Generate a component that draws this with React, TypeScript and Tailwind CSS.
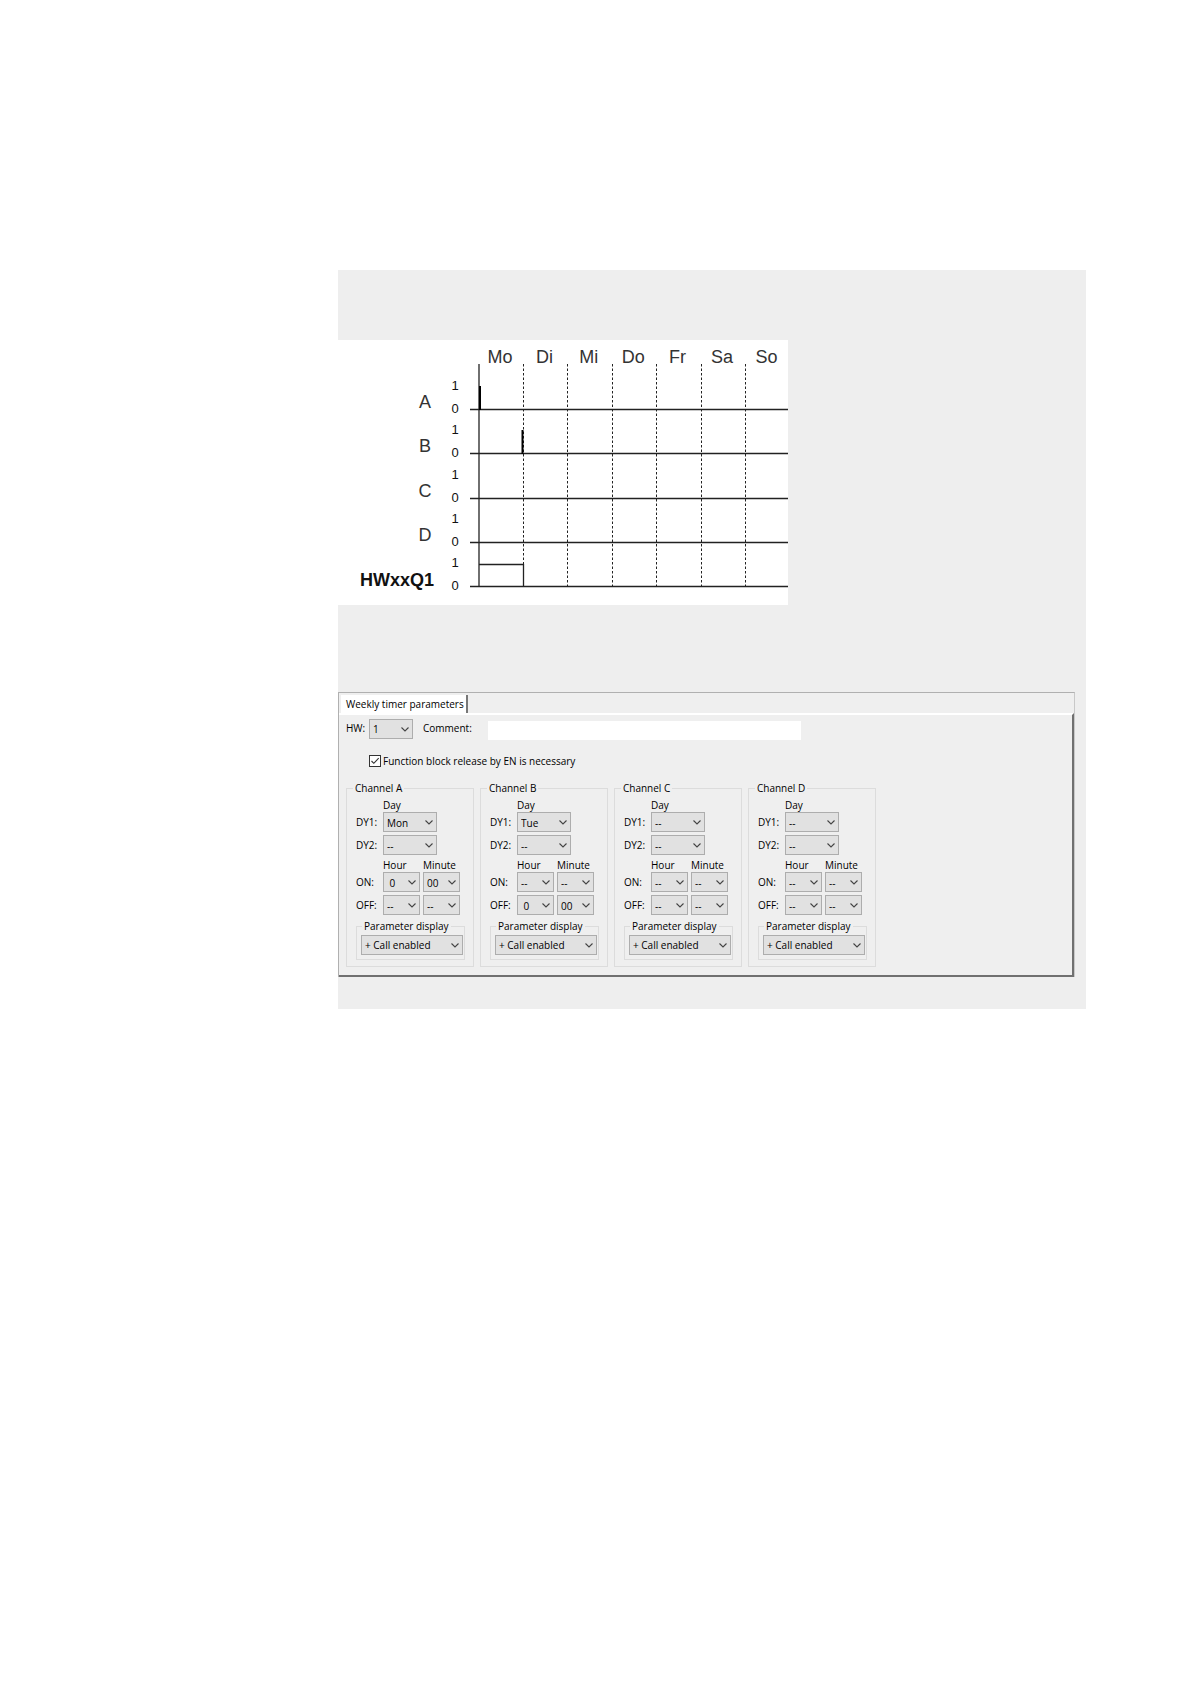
import { useId, useState } from 'react'

const DAYS = ['Mo', 'Di', 'Mi', 'Do', 'Fr', 'Sa', 'So']

const ROWS = [
  { name: 'A', y: 70 },
  { name: 'B', y: 114 },
  { name: 'C', y: 159 },
  { name: 'D', y: 203 },
  { name: 'HWxxQ1', y: 247 },
]

const CHANNELS = [
  { name: 'Channel A', dy1: 'Mon', dy2: '--', on: ['\u00a00', '00'], off: ['--', '--'] },
  { name: 'Channel B', dy1: 'Tue', dy2: '--', on: ['--', '--'], off: ['\u00a00', '00'] },
  { name: 'Channel C', dy1: '--', dy2: '--', on: ['--', '--'], off: ['--', '--'] },
  { name: 'Channel D', dy1: '--', dy2: '--', on: ['--', '--'], off: ['--', '--'] },
]

type Channel = (typeof CHANNELS)[number]

function TimingChart() {
  return (
    <svg
      width="450"
      height="265"
      viewBox="0 0 450 265"
      role="img"
      aria-label="Weekly timer signal diagram"
      className="block bg-white font-['Liberation_Sans',Arial,sans-serif]"
    >
      {DAYS.map((day, i) => (
        <text key={day} x={162 + i * 44.4} y="23" fontSize="18" textAnchor="middle" fill="#333">
          {day}
        </text>
      ))}

      {/* day separators */}
      {DAYS.slice(1).map((day, i) => (
        <line
          key={day}
          x1={Math.round(185 + i * 44.4) + 0.5}
          x2={Math.round(185 + i * 44.4) + 0.5}
          y1="24"
          y2="246"
          stroke="#222"
          strokeDasharray="2.5 2"
        />
      ))}
      <line x1="141" x2="141" y1="24" y2="247" stroke="#333" strokeWidth="1.4" />

      {ROWS.map((row, i) => {
        const isOutput = i === ROWS.length - 1
        return (
          <g key={row.name}>
            <line x1="132" x2="450" y1={row.y - 0.5} y2={row.y - 0.5} stroke="#222" strokeWidth="1.4" />
            <text
              x={isOutput ? 96 : 87}
              y={isOutput ? 246 : row.y - 2}
              fontSize="18"
              fontWeight={isOutput ? 700 : 400}
              textAnchor={isOutput ? 'end' : 'middle'}
              fill={isOutput ? '#111' : '#333'}
            >
              {row.name}
            </text>
            <text x="117" y={row.y - 20} fontSize="13" textAnchor="middle" fill="#111">
              1
            </text>
            <text x="117" y={row.y + 3} fontSize="13" textAnchor="middle" fill="#111">
              0
            </text>
          </g>
        )
      })}

      {/* pulses on A and B, and the resulting output */}
      <line x1="142" x2="142" y1="46" y2="70" stroke="#000" strokeWidth="2" />
      <line x1="184.5" x2="184.5" y1="90" y2="114" stroke="#000" strokeWidth="2" />
      <path d="M141 224.5H185.5V247" fill="none" stroke="#222" strokeWidth="1.3" />
    </svg>
  )
}

function Combo({
  id,
  value,
  label,
  className = '',
}: {
  id?: string
  value: string
  label?: string
  className?: string
}) {
  return (
    <span className={`relative block ${className}`}>
      <select
        id={id}
        aria-label={label}
        defaultValue={value}
        className="block h-5 w-full appearance-none border border-[#adadad] bg-[#e1e1e1] pl-[3px] text-black"
      >
        <option value={value}>{value}</option>
      </select>
      <svg
        viewBox="0 0 8 5"
        className="pointer-events-none absolute top-2 right-1 h-[5px] w-2"
        fill="none"
        stroke="#444"
        strokeWidth="1.1"
      >
        <path d="M0.5 0.5L4 4L7.5 0.5" />
      </svg>
    </span>
  )
}

function ChannelGroup({ channel }: { channel: Channel }) {
  const id = useId()
  return (
    <fieldset className="w-32 border border-[#dcdcdc] pr-2 pb-[6px] pl-[9px]">
      <legend className="-ml-[3px] px-[2px]">{channel.name}</legend>
      <div className="grid grid-cols-[24px_37px_37px] gap-x-[3px] pt-[3px] whitespace-nowrap">
        <span className="col-start-2">Day</span>
      </div>
      <div className="grid grid-cols-[24px_37px_37px] gap-[3px] leading-5 whitespace-nowrap">
        <label htmlFor={`${id}-dy1`}>DY1:</label>
        <Combo id={`${id}-dy1`} value={channel.dy1} className="col-span-2 w-[54px]" />
        <label htmlFor={`${id}-dy2`}>DY2:</label>
        <Combo id={`${id}-dy2`} value={channel.dy2} className="col-span-2 w-[54px]" />
      </div>
      <div className="grid grid-cols-[24px_37px_37px] gap-x-[3px] pt-[3px] whitespace-nowrap">
        <span className="col-start-2">Hour</span>
        <span>Minute</span>
      </div>
      <div className="grid grid-cols-[24px_37px_37px] gap-[3px] leading-5 whitespace-nowrap">
        <label htmlFor={`${id}-on`}>ON:</label>
        <Combo id={`${id}-on`} value={channel.on[0]} />
        <Combo label="ON minute" value={channel.on[1]} />
        <label htmlFor={`${id}-off`}>OFF:</label>
        <Combo id={`${id}-off`} value={channel.off[0]} />
        <Combo label="OFF minute" value={channel.off[1]} />
      </div>
      <fieldset className="mt-1 border border-[#dcdcdc] pt-[2px] pr-px pb-1 pl-1">
        <legend className="ml-px px-[2px]">Parameter display</legend>
        <Combo label="Parameter display" value="+ Call enabled" />
      </fieldset>
    </fieldset>
  )
}

function TimerParameters() {
  const [release, setRelease] = useState(true)
  return (
    <div className="mr-[11px] border border-[#b0b0b0] border-r-[#c8c8c8] border-b-0 bg-[#efefef] text-[10px] leading-[14px] text-black">
      <div className="flex pt-[2px] pl-[2px]" role="tablist">
        <button
          type="button"
          role="tab"
          aria-selected="true"
          className="h-[18px] border-r-2 border-[#777] bg-white pr-[2px] pl-[5px]"
        >
          Weekly timer parameters
        </button>
      </div>
      <div className="border-t-2 border-r-2 border-b-2 border-t-white border-r-[#707070] border-b-[#707070] pt-1 pr-2 pb-2 pl-[7px]">
        <div className="flex items-start leading-[18px]">
          <label htmlFor="hw" className="w-[23px]">
            HW:
          </label>
          <Combo id="hw" value="1" className="w-11" />
          <label htmlFor="comment" className="ml-[10px] w-[65px]">
            Comment:
          </label>
          <input id="comment" type="text" className="mt-[2px] h-[19px] w-[313px] bg-white px-1 outline-none" />
        </div>
        <label className="mt-[14px] ml-[23px] flex h-[14px] items-center gap-[2px]">
          <span className="relative block size-3">
            <input
              type="checkbox"
              checked={release}
              onChange={(e) => setRelease(e.target.checked)}
              className="block size-3 appearance-none border border-[#333] bg-white"
            />
            {release && (
              <svg
                viewBox="0 0 12 12"
                className="pointer-events-none absolute inset-0"
                fill="none"
                stroke="#333"
                strokeWidth="1.1"
              >
                <path d="M2.5 6L4.8 8.3L9.7 3.2" />
              </svg>
            )}
          </span>
          Function block release by EN is necessary
        </label>
        <div className="mt-[13px] flex flex-wrap gap-[6px]">
          {CHANNELS.map((channel) => (
            <ChannelGroup key={channel.name} channel={channel} />
          ))}
        </div>
      </div>
    </div>
  )
}

export default function App() {
  return (
    <main className="min-h-screen bg-white pt-[270px] pr-[105px] pl-[338px] font-['Open_Sans',sans-serif]">
      <section className="bg-[#eeeeee] pt-[70px] pb-8">
        <TimingChart />
        <div className="mt-[87px]">
          <TimerParameters />
        </div>
      </section>
    </main>
  )
}
